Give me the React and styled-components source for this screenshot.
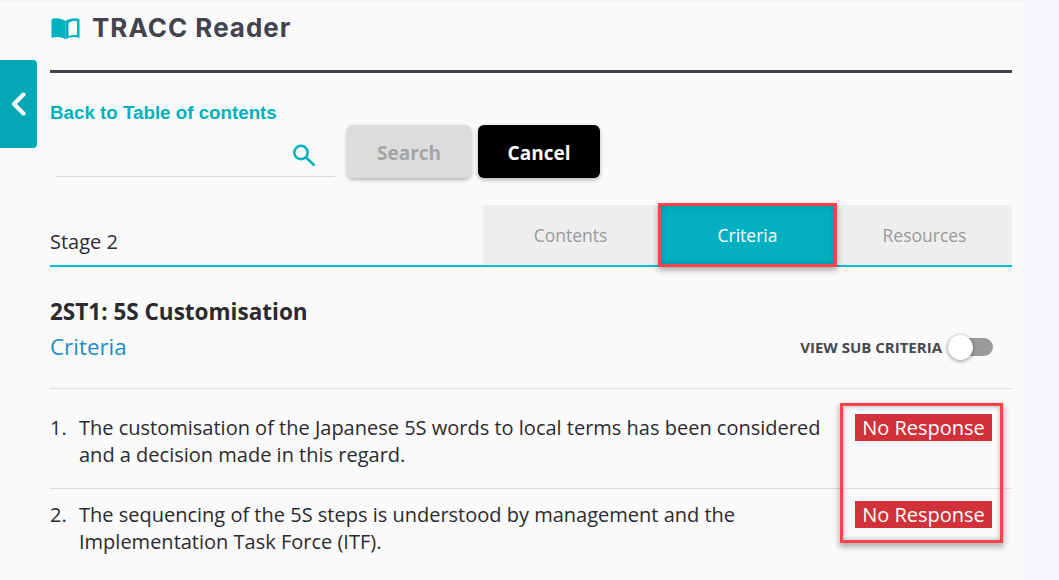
import React from 'react';
import styled, { createGlobalStyle } from 'styled-components';

const Global = createGlobalStyle`
  html, body { margin: 0; padding: 0; background: #f6f7fa; }
  body { font-family: "Open Sans", sans-serif; overflow: hidden; }
  * { box-sizing: border-box; }
`;

const Page = styled.div`
  position: relative;
  width: 1024px;
  height: 580px;
  padding: 0 12px 0 50px;
  background: #fafafa;
  border-top: 2px solid #f0f3f8;
  overflow: hidden;
`;
const SideTab = styled.button`
  position: absolute;
  left: 0;
  top: 58px;
  width: 37px;
  height: 88px;
  padding: 0;
  border: 0;
  border-radius: 0 4px 4px 0;
  background: #07a8b5;
  display: flex;
  align-items: center;
  justify-content: center;
`;
const Header = styled.header`
  height: 68px;
  padding-top: 7px;
  display: flex;
  align-items: flex-start;
  gap: 12px;
`;
const BookSlot = styled.div`
  margin: 8px 0 0 1px;
  height: 23px;
`;
const Title = styled.h1`
  margin: 0;
  font: 700 26px/38px "Inter", sans-serif;
  letter-spacing: 1px;
  color: #42434d;
`;
const Rule = styled.hr`
  margin: 0;
  height: 3px;
  border: 0;
  background: #444450;
`;
const BackLink = styled.a`
  display: block;
  margin-top: 28px;
  font: 700 18.75px/24px "Liberation Sans", sans-serif;
  color: #00b0bf;
`;
const SearchRow = styled.div`
  display: flex;
  align-items: flex-start;
  gap: 7px;
`;
const SearchField = styled.div`
  width: 279px;
  height: 52px;
  margin: 0 5px 0 6px;
  border-bottom: 1px solid #dcdcdc;
  display: flex;
  justify-content: flex-end;
  align-items: flex-start;
  padding: 19px 19px 0 0;
`;
const Button = styled.button`
  width: ${({ $w }) => $w}px;
  height: 53px;
  padding: 3px 0 0;
  border: 0;
  border-radius: 6px;
  font: 700 19px "Open Sans", sans-serif;
  color: ${({ $dark }) => ($dark ? '#fff' : '#a5a5a5')};
  background: ${({ $dark }) => ($dark ? '#000' : '#dcdcdc')};
  box-shadow: 0 2px 4px rgba(0, 0, 0, 0.28);
`;
const TabBar = styled.div`
  margin-top: 27px;
  height: 62px;
  display: flex;
  align-items: flex-start;
  justify-content: space-between;
  border-bottom: 2px solid #00bcd0;
`;
const Stage = styled.div`
  font-size: 20px;
  line-height: 24px;
  margin-top: 25px;
  color: #2f2f35;
`;
const Tabs = styled.div`
  display: flex;
  width: 529px;
  height: 60px;
  background: #eeeeee;
`;
const Tab = styled.div`
  flex: 1;
  display: flex;
  align-items: center;
  justify-content: center;
  font-size: 17.5px;
  color: ${({ $active }) => ($active ? '#fff' : '#9a9a9a')};
  background: ${({ $active }) => ($active ? '#02b0c0' : 'transparent')};
  ${({ $active }) =>
    $active &&
    `outline: 3px solid #fb4349;
     outline-offset: -1px;
     margin: 0 2px;
     box-shadow: 0 3px 6px 2px rgba(0,0,0,0.35), inset 0 0 6px rgba(0,0,0,0.3);`}
`;
const Heading = styled.h2`
  margin: 29px 0 0;
  font: 700 22.5px/32px "Open Sans", sans-serif;
  color: #2b2a2e;
`;
const SubRow = styled.div`
  height: 42px;
  margin-top: 2px;
  display: flex;
  align-items: flex-start;
  justify-content: space-between;
`;
const SubTitle = styled.div`
  font-size: 22.4px;
  line-height: 34px;
  color: #1a8cc6;
`;
const ToggleRow = styled.label`
  display: flex;
  align-items: center;
  gap: 6px;
  height: 34px;
  margin-right: 19px;
  font: 700 15px "Open Sans", sans-serif;
  color: #47474f;
`;
const Toggle = styled.span`
  position: relative;
  display: block;
  width: 45px;
  height: 18px;
  border-radius: 9px;
  background: #9b9b9b;
  &::after {
    content: '';
    position: absolute;
    left: 0;
    top: -3px;
    width: 25px;
    height: 25px;
    border-radius: 50%;
    background: #fff;
    box-shadow: 0 1px 4px rgba(0, 0, 0, 0.45);
  }
`;
const List = styled.div`
  position: relative;
  margin-top: 16px;
`;
const Item = styled.div`
  height: 100px;
  padding-top: 12px;
  display: flex;
  align-items: flex-start;
  border-top: 1px solid #dedede;
  font-size: 20px;
  line-height: 27px;
  color: #2b2a2e;
  &:first-child {
    padding-top: 25px;
  }
`;
const Num = styled.span`
  width: 29px;
  flex: none;
`;
const ItemText = styled.div`
  width: 752px;
  flex: none;
`;
const Badge = styled.span`
  margin-left: 24px;
  flex: none;
  width: 137px;
  height: 27px;
  text-align: center;
  font-size: 20px;
  line-height: 27px;
  color: #fff;
  background: #d13138;
`;
const BadgeHighlight = styled.div`
  position: absolute;
  left: 790px;
  top: 15px;
  width: 163px;
  height: 140px;
  border: 3px solid #fb4349;
  box-shadow: 0 3px 6px 1px rgba(0, 0, 0, 0.3), inset 0 0 5px rgba(0, 0, 0, 0.3);
  pointer-events: none;
`;

const BookIcon = () => (
  <svg width="29" height="23" viewBox="0 0 29 23">
    <path d="M14.500 4C11 1.500 5 .5.5 2V21C5 19.500 10 19.500 14.500 22.500Z" fill="#00b0bf" />
    <path d="M14.500 4C18 1.500 24 .5 28.500 2V21C24 19.500 19 19.500 14.500 22.500Z" fill="#00b0bf" />
    <path d="M17.500 6C19.500 4.300 23.500 3.800 26 4.200V18C23 17.700 19.800 18.200 17.500 19.200Z" fill="#fafafa" />
  </svg>
);
const ChevronIcon = () => (
  <svg width="15" height="24" viewBox="0 0 15 24">
    <path d="M12.500 2.500 3 12l9.500 9.500" fill="none" stroke="#fff" strokeWidth="4" strokeLinecap="round" strokeLinejoin="round" />
  </svg>
);
const SearchIcon = () => (
  <svg width="23" height="23" viewBox="0 0 23 23">
    <circle cx="8" cy="8.500" r="6.700" fill="none" stroke="#00b0bf" strokeWidth="2.500" />
    <path d="M12.800 13.300 21.500 21.500" stroke="#00b0bf" strokeWidth="2.600" />
  </svg>
);

const items = [
  'The customisation of the Japanese 5S words to local terms has been considered and a decision made in this regard.',
  'The sequencing of the 5S steps is understood by management and the Implementation Task Force (ITF).',
];

const App = () => {
  return (
    <Page>
      <Global />
      <SideTab><ChevronIcon /></SideTab>
      <Header>
        <BookSlot><BookIcon /></BookSlot>
        <Title>TRACC Reader</Title>
      </Header>
      <Rule />
      <BackLink>Back to Table of contents</BackLink>
      <SearchRow>
        <SearchField><SearchIcon /></SearchField>
        <Button $w={124}>Search</Button>
        <Button $w={122} $dark>Cancel</Button>
      </SearchRow>
      <TabBar>
        <Stage>Stage 2</Stage>
        <Tabs>
          <Tab>Contents</Tab>
          <Tab $active>Criteria</Tab>
          <Tab>Resources</Tab>
        </Tabs>
      </TabBar>
      <Heading>2ST1: 5S Customisation</Heading>
      <SubRow>
        <SubTitle>Criteria</SubTitle>
        <ToggleRow>VIEW SUB CRITERIA<Toggle /></ToggleRow>
      </SubRow>
      <List>
        {items.map((text, i) => (
          <Item key={i}>
            <Num>{i + 1}.</Num>
            <ItemText>{text}</ItemText>
            <Badge>No Response</Badge>
          </Item>
        ))}
        <BadgeHighlight />
      </List>
    </Page>
  );
};

export default App;
